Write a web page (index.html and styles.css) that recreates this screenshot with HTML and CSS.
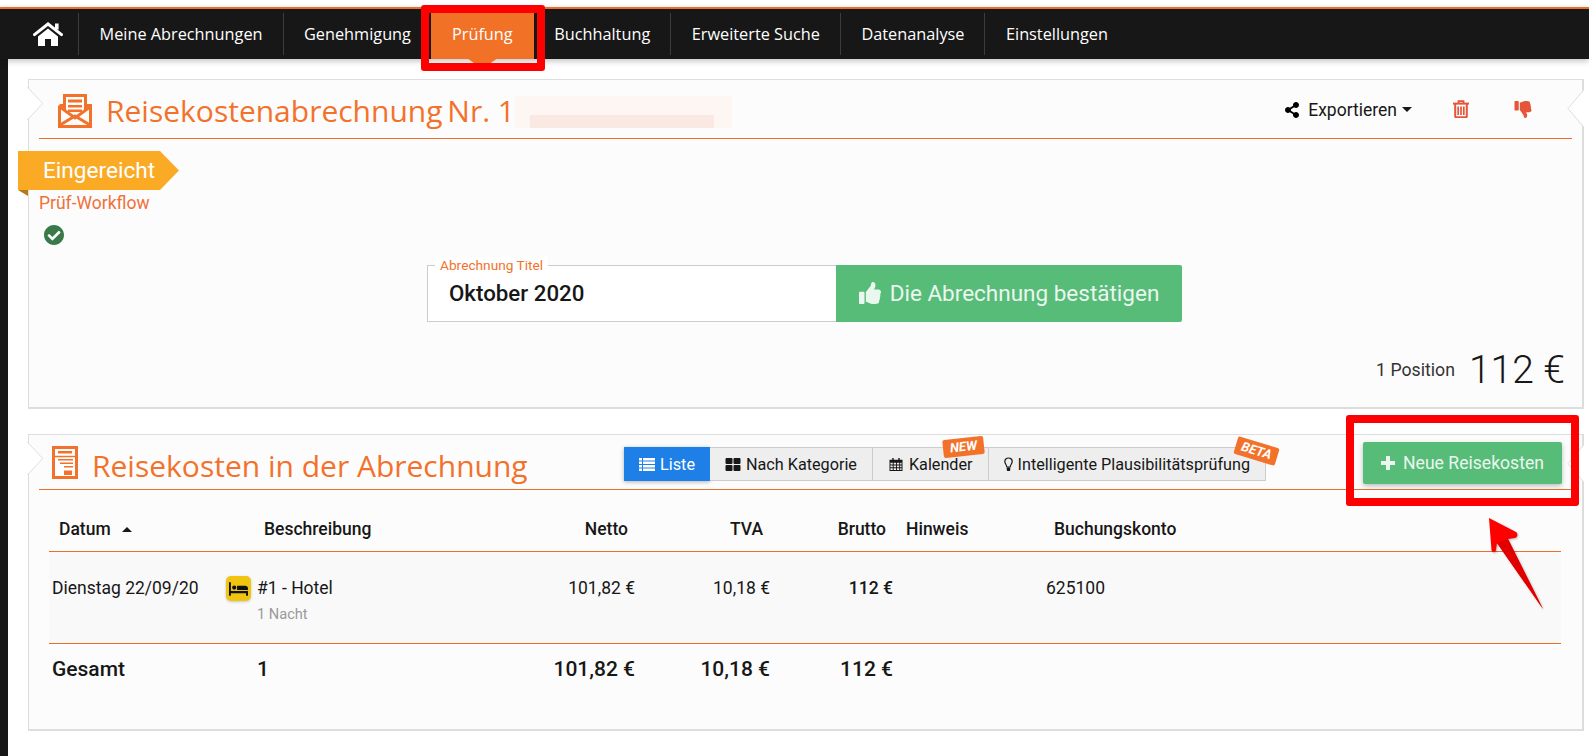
FILE: index.html
```html
<!DOCTYPE html>
<html lang="de">
<head>
<meta charset="utf-8">
<title>Reisekostenabrechnung</title>
<link rel="stylesheet" href="styles.css">
</head>
<body>
<nav class="nav">
  <a class="nav-home" href="#" aria-label="Start">
    <svg class="icon-home" viewBox="0 0 30 24"><path d="M1.5 12.6 15 2l13.5 10.6" fill="none" stroke="#fff" stroke-width="3" stroke-linecap="round"/><rect x="22" y="1.5" width="3.6" height="6" fill="#fff"/><path d="M15 6.5 25 14.5V24h-7v-7h-6v7H5v-9.500z" fill="#fff"/></svg>
  </a>
  <a class="nav-item" href="#">Meine Abrechnungen</a>
  <a class="nav-item" href="#">Genehmigung</a>
  <a class="nav-item active" href="#">Prüfung</a>
  <a class="nav-item" href="#">Buchhaltung</a>
  <a class="nav-item" href="#">Erweiterte Suche</a>
  <a class="nav-item" href="#">Datenanalyse</a>
  <a class="nav-item" href="#">Einstellungen</a>
</nav>

<main class="page">
  <section class="card card-report">
    <svg class="notch notch-left" viewBox="0 0 17 34"><path d="M0 0 16 17 0 34" fill="#fff" stroke="#ddd"/></svg>
    <svg class="notch notch-right" viewBox="0 0 17 38"><path d="M17 0 1 19 17 38" fill="#fff" stroke="#ddd"/></svg>
    <header class="head head-report">
      <svg class="icon-envelope" viewBox="0 0 34 34"><path d="M1.500 11.500h4M28.500 11.500h4V32.500H1.500V11.500" fill="none" stroke="#f3722b" stroke-width="3"/><path d="M6.500 17V1.500h21V17" fill="#fff" stroke="#f3722b" stroke-width="3"/><path d="M10 5.500h14v3H10zM10 11h14v2.500H10zM10 15.500h14v2.500H10z" fill="#f3722b"/><path d="M2 13 17 24 32 13M2 31 17 22 32 31" fill="none" stroke="#f3722b" stroke-width="3"/></svg>
      <h1 class="title title-report"><span class="title-tight">Reisekostenabrechnung </span>Nr. 1</h1>
      <div class="redacted"></div>
      <div class="actions">
        <span class="export">
          <svg class="icon-share" viewBox="0 0 448 512"><path d="M352 320c-22.608 0-43.387 7.819-59.790 20.895l-102.486-64.054a96.551 96.551 0 0 0 0-41.683l102.486-64.054C308.613 184.181 329.392 192 352 192c53.019 0 96-42.981 96-96S405.019 0 352 0s-96 42.981-96 96c0 7.158.79 14.130 2.276 20.841L155.790 180.895C139.387 167.819 118.608 160 96 160c-53.019 0-96 42.981-96 96s42.981 96 96 96c22.608 0 43.387-7.819 59.790-20.895l102.486 64.054A96.301 96.301 0 0 0 256 416c0 53.019 42.981 96 96 96s96-42.981 96-96-42.981-96-96-96z"/></svg>
          Exportieren<i class="caret"></i>
        </span>
        <svg class="icon-trash" viewBox="0 0 16 18"><path d="M5.500 3V1.200h5V3" fill="none" stroke="#e4553a" stroke-width="1.800"/><rect y="2.600" width="16" height="2" fill="#e4553a"/><path d="M2.200 4v12.200c0 .6.400 1 1 1h9.600c.6 0 1-.4 1-1V4" fill="none" stroke="#e4553a" stroke-width="2"/><path d="M5.200 6.500v8.500M8 6.500v8.500M10.800 6.500v8.500" stroke="#e4553a" stroke-width="1.700"/></svg>
        <svg class="icon-thumbdown" viewBox="0 0 512 512"><g transform="matrix(1 0 0 -1 0 512)"><path d="M104 224H24c-13.255 0-24 10.745-24 24v240c0 13.255 10.745 24 24 24h80c13.255 0 24-10.745 24-24V248c0-13.255-10.745-24-24-24zM384 81.452c0 42.416-25.970 66.208-33.277 94.548h101.723c33.397 0 59.397 27.746 59.553 58.098.084 17.938-7.546 37.249-19.439 49.197l-.11.11c9.836 23.337 8.237 56.037-9.308 79.469 8.681 25.895-.069 57.704-16.382 74.757 4.298 17.598 2.244 32.575-6.148 44.632C440.202 511.587 389.616 512 346.839 512l-2.845-.001c-48.287-.017-87.806-17.598-119.560-31.725-15.957-7.099-36.821-15.887-52.651-16.178-6.540-.12-11.783-5.457-11.783-11.998v-213.770c0-3.200 1.282-6.271 3.558-8.521 39.614-39.144 56.648-80.587 89.117-113.111 14.804-14.832 20.188-37.236 25.393-58.902C282.515 39.293 291.817 0 312 0c24 0 72 8 72 81.452z" fill="#e4553a"/></g></svg>
      </div>
    </header>

    <div class="ribbon"><span class="ribbon-label">Eingereicht</span></div>
    <div class="workflow">Prüf-Workflow</div>
    <svg class="icon-check" viewBox="8 8 496 496"><path d="M504 256c0 136.967-111.033 248-248 248S8 392.967 8 256 119.033 8 256 8s248 111.033 248 248zM227.314 387.314l184-184c6.248-6.248 6.248-16.379 0-22.627l-22.627-22.627c-6.248-6.249-16.379-6.249-22.628 0L216 308.118l-70.059-70.059c-6.248-6.248-16.379-6.248-22.628 0l-22.627 22.627c-6.248 6.248-6.248 16.379 0 22.627l104 104c6.249 6.250 16.379 6.250 22.628.001z" fill="#3a7a4a"/></svg>

    <form class="confirm">
      <div class="field">
        <label class="field-label">Abrechnung Titel</label>
        <span class="field-value">Oktober 2020</span>
      </div>
      <button class="btn-confirm" type="button">
        <svg class="icon-thumbup" viewBox="0 0 512 512"><path d="M104 224H24c-13.255 0-24 10.745-24 24v240c0 13.255 10.745 24 24 24h80c13.255 0 24-10.745 24-24V248c0-13.255-10.745-24-24-24zM384 81.452c0 42.416-25.970 66.208-33.277 94.548h101.723c33.397 0 59.397 27.746 59.553 58.098.084 17.938-7.546 37.249-19.439 49.197l-.11.11c9.836 23.337 8.237 56.037-9.308 79.469 8.681 25.895-.069 57.704-16.382 74.757 4.298 17.598 2.244 32.575-6.148 44.632C440.202 511.587 389.616 512 346.839 512l-2.845-.001c-48.287-.017-87.806-17.598-119.560-31.725-15.957-7.099-36.821-15.887-52.651-16.178-6.540-.12-11.783-5.457-11.783-11.998v-213.770c0-3.200 1.282-6.271 3.558-8.521 39.614-39.144 56.648-80.587 89.117-113.111 14.804-14.832 20.188-37.236 25.393-58.902C282.515 39.293 291.817 0 312 0c24 0 72 8 72 81.452z" fill="#eaf7ef"/></svg>
        Die Abrechnung bestätigen
      </button>
    </form>

    <div class="summary">
      <span class="summary-count">1 Position</span>
      <span class="summary-total">112 €</span>
    </div>
  </section>

  <section class="card card-items">
    <svg class="notch notch-left-2" viewBox="0 0 17 34"><path d="M0 0 16 17 0 34" fill="#fff" stroke="#ddd"/></svg>
    <svg class="notch notch-right-2" viewBox="0 0 17 38"><path d="M17 0 1 19 17 38" fill="#fff" stroke="#ddd"/></svg>
    <header class="head head-items">
      <svg class="icon-doc" viewBox="0 0 26 33"><rect x="1.500" y="1.500" width="23" height="30" fill="#fff" stroke="#f3722b" stroke-width="3"/><path d="M3 10.500h20" stroke="#f3722b" stroke-width="1.500"/><path d="M6 5h14v2.500H6zM6 13h15v1.600H6zM8 16.500h13v1.600H8zM12 20h9v1.600h-9zM12 24.500h8v4.500h-8z" fill="#f3722b"/></svg>
      <h2 class="title title-items">Reisekosten in der Abrechnung</h2>
      <div class="tabs">
        <span class="tab tab-active">
          <svg class="tab-icon" viewBox="0 0 16 13"><path d="M0 0h3v2.500H0zM4 0h12v2.500H4zM0 3.500h3V6H0zM4 3.500h12V6H4zM0 7h3v2.500H0zM4 7h12v2.500H4zM0 10.500h3V13H0zM4 10.500h12V13H4z" fill="#fff"/></svg>Liste
        </span>
        <span class="tab">
          <svg class="tab-icon icon-grid" viewBox="0 0 15 13"><rect width="7" height="6" rx="1"/><rect x="8" width="7" height="6" rx="1"/><rect y="7" width="7" height="6" rx="1"/><rect x="8" y="7" width="7" height="6" rx="1"/></svg>Nach Kategorie
        </span>
        <span class="tab">
          <svg class="tab-icon icon-grid" viewBox="0 0 14 14"><path d="M0 2h14v12H0zM1 5v2h2.500V5zM4.500 5v2H7V5h-2.500zM8 5v2h2.500V5zM11.500 5v2H13V5zM1 8v2h2.500V8zM4.500 8v2H7V8h-2.500zM8 8v2h2.500V8zM11.500 8v2H13V8zM1 11v2h2.500v-2zM4.500 11v2H7v-2h-2.500zM8 11v2h2.500v-2zM11.500 11v2H13v-2z" fill-rule="evenodd"/><rect x="3" width="1.500" height="3.500"/><rect x="9.500" width="1.500" height="3.500"/></svg>Kalender
          <em class="badge badge-new">NEW</em>
        </span>
        <span class="tab">
          <svg class="tab-icon icon-bulb" viewBox="0 0 9 15"><path d="M4.500 1C2.300 1 .8 2.600.8 4.500c0 2.200 1.900 3.200 2 5.500h3.400c.1-2.300 2-3.300 2-5.500C8.200 2.600 6.700 1 4.500 1z" fill="none" stroke="#171717" stroke-width="1.200"/><rect x="2.800" y="10.500" width="3.400" height="3.500" rx=".8" fill="#171717"/></svg>Intelligente Plausibilitätsprüfung
          <em class="badge badge-beta">BETA</em>
        </span>
      </div>
      <button class="btn-new" type="button">
        <svg class="icon-plus" viewBox="0 0 14 14"><path d="M5 0h4v5h5v4H9v5H5V9H0V5h5z" fill="#eaf7ef"/></svg>
        Neue Reisekosten
      </button>
    </header>

    <div class="table">
      <div class="trow thead">
        <div class="th-date">Datum<i class="sort"></i></div>
        <div class="th-desc">Beschreibung</div>
        <div class="num-h">Netto</div>
        <div class="num-h">TVA</div>
        <div class="num-h">Brutto</div>
        <div class="th-note">Hinweis</div>
        <div class="th-account">Buchungskonto</div>
      </div>
      <div class="trow tbody">
        <div class="td-date">Dienstag 22/09/20</div>
        <div class="td-desc">
          <span class="bed">
            <svg viewBox="0 0 20 14"><path d="M0 0h2v9h18v5h-2v-2.500H2V14H0z" fill="#111"/><circle cx="5.500" cy="5.500" r="2.200" fill="#111"/><path d="M8.500 3.500h8.500c1.700 0 3 1.300 3 3V8H8.500z" fill="#111"/></svg>
          </span>
          <div>
            <div>#1 - Hotel</div>
            <div class="sub">1 Nacht</div>
          </div>
        </div>
        <div class="num">101,82 €</div>
        <div class="num">10,18 €</div>
        <div class="num strong">112 €</div>
        <div></div>
        <div>625100</div>
      </div>
      <div class="trow tfoot">
        <div class="td-date">Gesamt</div>
        <div class="foot-count">1</div>
        <div class="num">101,82 €</div>
        <div class="num">10,18 €</div>
        <div class="num">112 €</div>
        <div></div>
        <div></div>
      </div>
    </div>
  </section>
</main>

<div class="mark mark-nav"></div>
<div class="mark mark-btn"></div>
<svg class="arrow" viewBox="0 0 60 96"><path d="M1 1 28 15c2 1.200 2 5-1 6L20 22 55 92 9 26 8 33c-.5 3-4 3-4.500 0z" fill="#f00"/><path d="M9 26 55 92 20 22z" fill="#e00000"/></svg>
</body>
</html>
```
FILE: styles.css
```css
* { box-sizing: border-box; }
html, body { margin: 0; height: 100%; }
body {
  padding-top: 7px;
  background: #fff;
  color: #171717;
  font-family: Roboto, "Liberation Sans", sans-serif;
  font-size: 17.500px;
  overflow: hidden;
}

/* Navigation */
.nav {
  display: flex;
  height: 52px;
  border-top: 2px solid #e8702a;
  background: #171717;
  box-shadow: 0 2px 6px rgba(0,0,0,.25);
  position: relative;
  z-index: 1;
  font-family: "Open Sans", "Liberation Sans", sans-serif;
  font-size: 16.300px;
}
.nav a { color: #fff; text-decoration: none; display: flex; align-items: center; }
.nav-home { width: 79px; padding-left: 33px; border-right: 1px solid #3c3c3c; margin: 4px 0; }
.icon-home { width: 30px; height: 24px; }
.nav-item { padding: 0 21px 0 20.500px; position: relative; }
.nav-item::after {
  content: "";
  position: absolute;
  right: 0;
  top: 4px;
  bottom: 4px;
  width: 1px;
  background: #3c3c3c;
}
.nav-item:last-child::after { display: none; }
.nav-item.active { background: #f17127; padding: 0 21px; margin-left: -1px; }
.nav-item.active::after {
  right: 50%;
  top: 100%;
  bottom: auto;
  width: 28px;
  height: 5px;
  margin-right: -14px;
  background: #f17127;
  clip-path: polygon(0 0, 100% 0, 75% 100%, 25% 100%);
}

/* Page */
.page {
  min-height: calc(100vh - 59px);
  border-left: 8px solid #171717;
  padding: 20px 5px 0 20px;
  display: flex;
  flex-direction: column;
  gap: 25px;
}
.card {
  position: relative;
  background: #fcfcfc;
  border: 1px solid #ddd;
  border-width: 1px 2px 2px 1px;
  padding: 0 10px;
}
.card-report { height: 330px; }
.card-items { height: 297px; }
.notch { position: absolute; width: 17px; }
.notch-left { left: -2px; top: 7px; height: 33px; }
.notch-right { right: -2px; top: 9px; height: 39px; }
.notch-left-2 { left: -2px; top: 7px; height: 33px; }
.notch-right-2 { right: -2px; top: 9px; height: 39px; }

.head { display: flex; align-items: center; border-bottom: 1px solid #ea6f2c; }
.head-report { height: 59px; padding-left: 19px; }
.head-items { height: 55px; padding: 0 10px 0 13px; }
.title {
  margin: 0;
  font-family: "Open Sans", "Liberation Sans", sans-serif;
  font-size: 30px;
  font-weight: 400;
  color: #f3722b;
  white-space: nowrap;
}
.title-report { margin-top: 2px; }
.title-tight { word-spacing: -3px; }
.title-items { margin-top: 6px; }
.icon-envelope { width: 34px; height: 34px; margin: 3px 14px 0 0; flex: none; }
.icon-doc { width: 26px; height: 33px; margin: 0 14px 0 0; flex: none; }
.redacted {
  width: 217px;
  height: 32px;
  margin: 5px 0 0 0;
  background:
    linear-gradient(#fae8e2, #fae8e2) 15px 100% / 184px 13px no-repeat,
    #fdf6f3;
}
.actions { display: flex; align-items: center; margin-left: auto; padding-right: 40px; }
.export { display: flex; align-items: center; gap: 8px; margin-top: 1px; font-size: 17.500px; }
.icon-share { width: 16px; height: 16px; }
.caret {
  width: 0; height: 0;
  margin-left: -3px;
  border: 5px solid transparent;
  border-top-color: #171717;
  border-bottom: 0;
}
.icon-trash { width: 16px; height: 18px; margin-left: 41px; }
.icon-thumbdown { width: 18px; height: 17px; margin-left: 45px; }

/* Status */
.ribbon { position: relative; width: 161px; height: 39px; margin: 12px 0 0 -21px; }
.ribbon::after {
  content: "";
  position: absolute;
  left: 0;
  top: 100%;
  width: 10px;
  height: 6px;
  background: #b5791a;
  clip-path: polygon(0 0, 100% 0, 100% 100%);
}
.ribbon-label {
  display: flex;
  align-items: center;
  height: 100%;
  padding-left: 25px;
  background: #fbaa26;
  color: #fff;
  font-size: 22.600px;
  clip-path: polygon(0 0, 142px 0, 100% 50%, 142px 100%, 0 100%);
}
.workflow { height: 26px; line-height: 26px; color: #f07139; font-size: 17.500px; }
.icon-check { display: block; width: 20px; height: 20px; margin: 9px 0 0 5px; }

/* Confirm form */
.confirm { display: flex; width: 755px; height: 57px; margin: 20px 0 0 388px; }
.field {
  position: relative;
  flex: 1;
  display: flex;
  align-items: center;
  padding: 0 21px 2px;
  background: #fff;
  border: 1px solid #ccc;
  border-right: 0;
}
.field-label {
  position: absolute;
  left: 7px;
  top: -9px;
  padding: 0 5px;
  background: #fff;
  color: #f3722b;
  font-size: 13.700px;
  line-height: 16px;
}
.field-value { font-size: 22.300px; font-weight: 500; }
.btn-confirm {
  width: 346px;
  display: flex;
  align-items: center;
  justify-content: center;
  gap: 9px;
  padding: 0 0 2px;
  background: #57bc78;
  border: 0;
  border-radius: 0 2px 2px 0;
  color: #eaf7ef;
  font: 400 22.500px Roboto, sans-serif;
}
.icon-thumbup { width: 22px; height: 22px; }

.summary {
  display: flex;
  align-items: center;
  justify-content: flex-end;
  gap: 14px;
  height: 48px;
  margin-top: 24px;
  padding-right: 7px;
}
.summary-count { font-size: 17.700px; color: #333; }
.summary-total { font-size: 39px; font-weight: 300; line-height: 48px; }

/* Tabs */
.tabs { display: flex; height: 34px; margin: 4px 0 0 auto; position: relative; }
.tab {
  position: relative;
  display: flex;
  align-items: center;
  gap: 5px;
  padding: 0 15px;
  background: #eee;
  border: 1px solid #ccc;
  border-left: 0;
  font-size: 16.200px;
  white-space: nowrap;
}
.tab-active { background: #1e80e6; border: 0; color: #fff; box-shadow: 0 1px 4px rgba(0,0,0,.3); }
.tab-icon { width: 16px; height: 13px; flex: none; }
.icon-grid { fill: #171717; }
.icon-bulb { width: 9px; height: 15px; }
.badge {
  position: absolute;
  padding: 1px 6px;
  background: #f3722b;
  border-radius: 2px;
  color: #fff;
  font-size: 13px;
  font-weight: 700;
  font-style: italic;
  line-height: 16px;
}
.badge-new { top: -10px; right: 4px; padding: 1px 7px; transform: rotate(-6deg); }
.badge-beta { top: -6px; right: -13px; transform: rotate(17deg); }
.btn-new {
  width: 199px;
  height: 42px;
  margin-left: 97px;
  margin-top: 2px;
  display: flex;
  align-items: center;
  justify-content: center;
  gap: 8px;
  background: #57bc78;
  border: 0;
  border-radius: 2px;
  color: #eaf7ef;
  box-shadow: 0 2px 5px rgba(0,0,0,.25);
  font: 400 17.600px Roboto, sans-serif;
}
.icon-plus { width: 14px; height: 14px; }

/* Table */
.table { margin: 0 11px 0 10px; }
.trow {
  display: grid;
  grid-template-columns: 173px 298px 115px 135px 123px 153px 1fr;
  line-height: 24px;
}
.thead { padding: 27px 0 10px; font-weight: 500; border-bottom: 1px solid #ea6f2c; }
.th-date { padding-left: 10px; display: flex; align-items: center; }
.sort {
  width: 0; height: 0;
  margin-left: 11px;
  border: 5px solid transparent;
  border-bottom-color: #171717;
  border-top: 0;
}
.th-desc { padding-left: 42px; }
.num-h { text-align: right; padding-right: 7px; }
.th-note { padding-left: 13px; }
.th-account { padding-left: 8px; }
.tbody { height: 92px; padding-top: 24px; background: #f9f9f9; border-bottom: 1px solid #ea6f2c; }
.td-date { padding-left: 3px; }
.td-desc { display: flex; gap: 6px; padding-left: 4px; }
.bed {
  width: 25px;
  height: 25px;
  display: flex;
  align-items: center;
  justify-content: center;
  background: #f1c40f;
  border-radius: 5px;
  box-shadow: 0 1px 3px rgba(0,0,0,.2);
  flex: none;
}
.bed svg { width: 19px; height: 14px; }
.sub { margin-top: 4px; color: #999; font-size: 14.600px; line-height: 20px; }
.num { text-align: right; }
.strong { font-weight: 500; }
.tfoot { padding-top: 12px; font-size: 21px; font-weight: 500; line-height: 26px; }
.foot-count { padding-left: 35px; }

/* Annotations drawn over the screenshot */
.mark { position: absolute; z-index: 2; border: 8px solid #f00; border-radius: 3px; }
.mark-nav { left: 421px; top: 5px; width: 124px; height: 66px; }
.mark-btn { left: 1346px; top: 415px; width: 233px; height: 91px; }
.arrow { position: absolute; z-index: 2; left: 1488px; top: 517px; width: 60px; height: 96px; filter: drop-shadow(1px 1px 1px rgba(0,0,0,.25)); }
```
